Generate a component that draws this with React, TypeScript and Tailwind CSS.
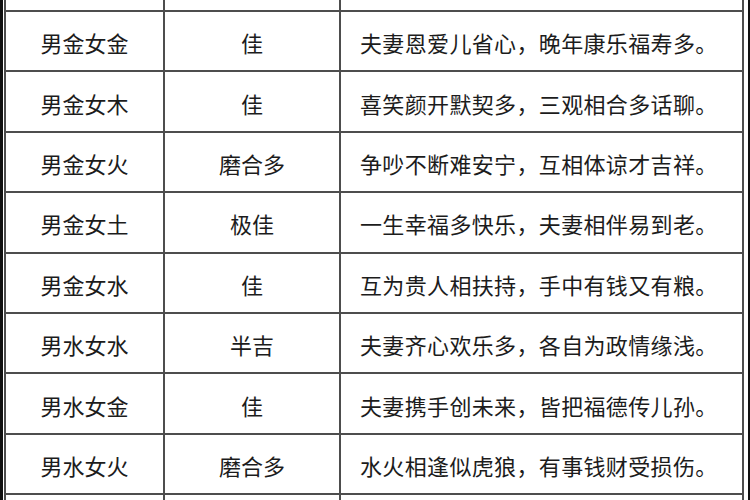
import React from "react";

const rows: [string, string, string][] = [
  ["男金女金", "佳", "夫妻恩爱儿省心，晚年康乐福寿多。"],
  ["男金女木", "佳", "喜笑颜开默契多，三观相合多话聊。"],
  ["男金女火", "磨合多", "争吵不断难安宁，互相体谅才吉祥。"],
  ["男金女土", "极佳", "一生幸福多快乐，夫妻相伴易到老。"],
  ["男金女水", "佳", "互为贵人相扶持，手中有钱又有粮。"],
  ["男水女水", "半吉", "夫妻齐心欢乐多，各自为政情缘浅。"],
  ["男水女金", "佳", "夫妻携手创未来，皆把福德传儿孙。"],
  ["男水女火", "磨合多", "水火相逢似虎狼，有事钱财受损伤。"],
  ["", "", ""],
];

export default function App() {
  return (
    <div
      className="flex h-[500px] w-[750px] overflow-hidden bg-white text-[#1c1c1c]"
      style={{ fontFamily: '"Noto Sans CJK SC", "Noto Sans", sans-serif' }}
    >
      <div className="w-[3px] shrink-0 bg-[#111]" />
      <div className="ml-[1px] flex w-[740px] shrink-0 flex-col border-x-2 border-[#4d4d4d]">
        <div className="grid h-[12px] shrink-0 grid-cols-[159px_176px_1fr] border-b-2 border-[#4d4d4d]">
          <div className="border-r-2 border-[#4d4d4d]" />
          <div className="border-r-2 border-[#4d4d4d]" />
          <div />
        </div>
        {rows.map((r, i) => (
          <div
            key={i}
            className="grid h-[60.4px] shrink-0 grid-cols-[159px_176px_1fr] border-b-2 border-[#4d4d4d] text-[22px] leading-none"
          >
            <div className="flex items-center justify-center border-r-2 border-[#4d4d4d] pt-[2px]">
              {r[0]}
            </div>
            <div className="flex items-center justify-center border-r-2 border-[#4d4d4d] pt-[2px]">
              {r[1]}
            </div>
            <div className="flex items-center pl-[19px] pt-[2px] tracking-[0.35px]">{r[2]}</div>
          </div>
        ))}
      </div>
      <div className="ml-auto w-[2px] shrink-0 bg-[#111]" />
    </div>
  );
}
